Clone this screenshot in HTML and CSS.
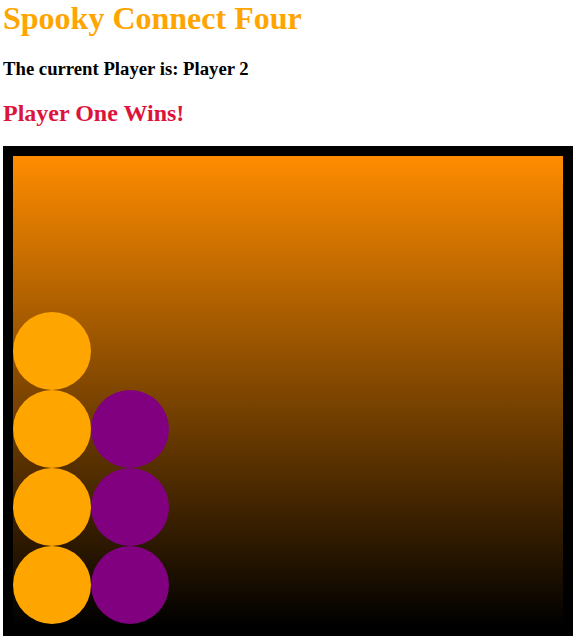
FILE: index.html
```html
<!DOCTYPE html>
<html>
<head>
<meta charset="utf-8">
<link rel="stylesheet" href="styles.css">
</head>
<body>
<h1 class="title">Spooky Connect Four</h1>
<h3 class="current">The current Player is: Player 2</h3>
<h2 class="winner">Player One Wins!</h2>
<div class="board">
  <div class="cell"></div><div class="cell"></div><div class="cell"></div><div class="cell"></div><div class="cell"></div><div class="cell"></div><div class="cell"></div>
  <div class="cell"></div><div class="cell"></div><div class="cell"></div><div class="cell"></div><div class="cell"></div><div class="cell"></div><div class="cell"></div>
  <div class="cell p1"></div><div class="cell"></div><div class="cell"></div><div class="cell"></div><div class="cell"></div><div class="cell"></div><div class="cell"></div>
  <div class="cell p1"></div><div class="cell p2"></div><div class="cell"></div><div class="cell"></div><div class="cell"></div><div class="cell"></div><div class="cell"></div>
  <div class="cell p1"></div><div class="cell p2"></div><div class="cell"></div><div class="cell"></div><div class="cell"></div><div class="cell"></div><div class="cell"></div>
  <div class="cell p1"></div><div class="cell p2"></div><div class="cell"></div><div class="cell"></div><div class="cell"></div><div class="cell"></div><div class="cell"></div>
</div>
</body>
</html>
```
FILE: styles.css
```css
body {
  margin: 0 3px;
  font-family: "Liberation Serif", "Times New Roman", serif;
  background: #fff;
}
.title {
  font-size: 32px;
  margin: 0 0 21px;
  color: #FFA500;
}
.current {
  font-size: 18.72px;
  margin: 18.72px 0;
  color: #000;
}
.winner {
  font-size: 24px;
  margin: 19.5px 0 19px;
  color: #DC143C;
}
.board {
  border: 10px solid #000;
  height: 470px;
  background: linear-gradient(#FF8C00, #000);
  display: grid;
  grid-template-columns: repeat(7, 78px);
  grid-template-rows: repeat(6, 78px);
}
.cell {
  border-radius: 50%;
}
.p1 { background: #FFA500; }
.p2 { background: #800080; }
```
